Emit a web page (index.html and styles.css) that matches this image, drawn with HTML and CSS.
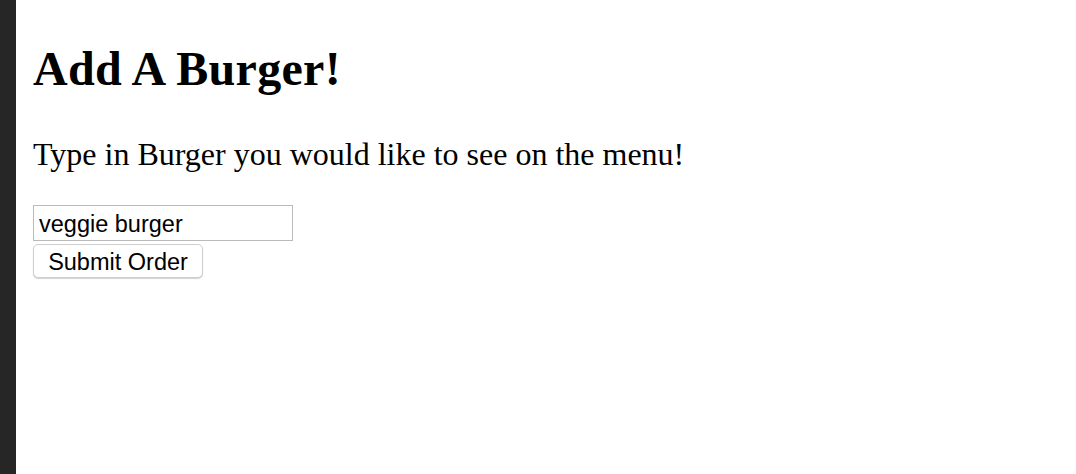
FILE: index.html
```html
<!DOCTYPE html>
<html>
<head>
<meta charset="utf-8">
<title>Add A Burger</title>
<link rel="stylesheet" href="styles.css">
</head>
<body>
<div class="layout">
  <div class="sidebar"></div>
  <main class="content">
    <h1 class="title">Add A Burger!</h1>
    <p class="lead">Type in Burger you would like to see on the menu!</p>
    <form class="order-form">
      <input class="burger-input" type="text" value="veggie burger">
      <button class="submit-btn" type="button">Submit Order</button>
    </form>
  </main>
</div>
</body>
</html>
```
FILE: styles.css
```css
html, body {
  margin: 0;
  padding: 0;
  height: 100%;
  background: #ffffff;
}

.layout {
  display: flex;
  min-height: 100%;
}

.sidebar {
  width: 16px;
  flex: 0 0 16px;
  background: #262626;
}

.content {
  flex: 1;
  padding: 41px 0 0 17px;
  font-family: "Liberation Serif", "Times New Roman", serif;
  color: #000;
}

.title {
  margin: 0;
  font-size: 48px;
  letter-spacing: 0.3px;
  line-height: 55px;
  font-weight: bold;
}

.lead {
  margin: 40px 0 0 0;
  font-size: 32px;
  line-height: 37px;
}

.order-form {
  margin-top: 32px;
  display: flex;
  flex-direction: column;
  align-items: flex-start;
  gap: 3px;
}

.burger-input {
  box-sizing: border-box;
  width: 260px;
  height: 36px;
  margin: 0;
  padding: 2px 5px 0 5px;
  border: 1px solid #bbbbbb;
  border-radius: 0;
  outline: none;
  font-family: "Liberation Sans", Arial, sans-serif;
  font-size: 23.5px;
  color: #000;
  background: #fff;
}

.submit-btn {
  box-sizing: border-box;
  width: 170px;
  height: 34px;
  margin: 0;
  padding: 2px 0 0 0;
  border: 1px solid #cfcfcf;
  border-radius: 5px;
  background: #ffffff;
  box-shadow: 0 1px 1px rgba(0, 0, 0, 0.18);
  font-family: "Liberation Sans", Arial, sans-serif;
  font-size: 23.5px;
  color: #000;
}
```
